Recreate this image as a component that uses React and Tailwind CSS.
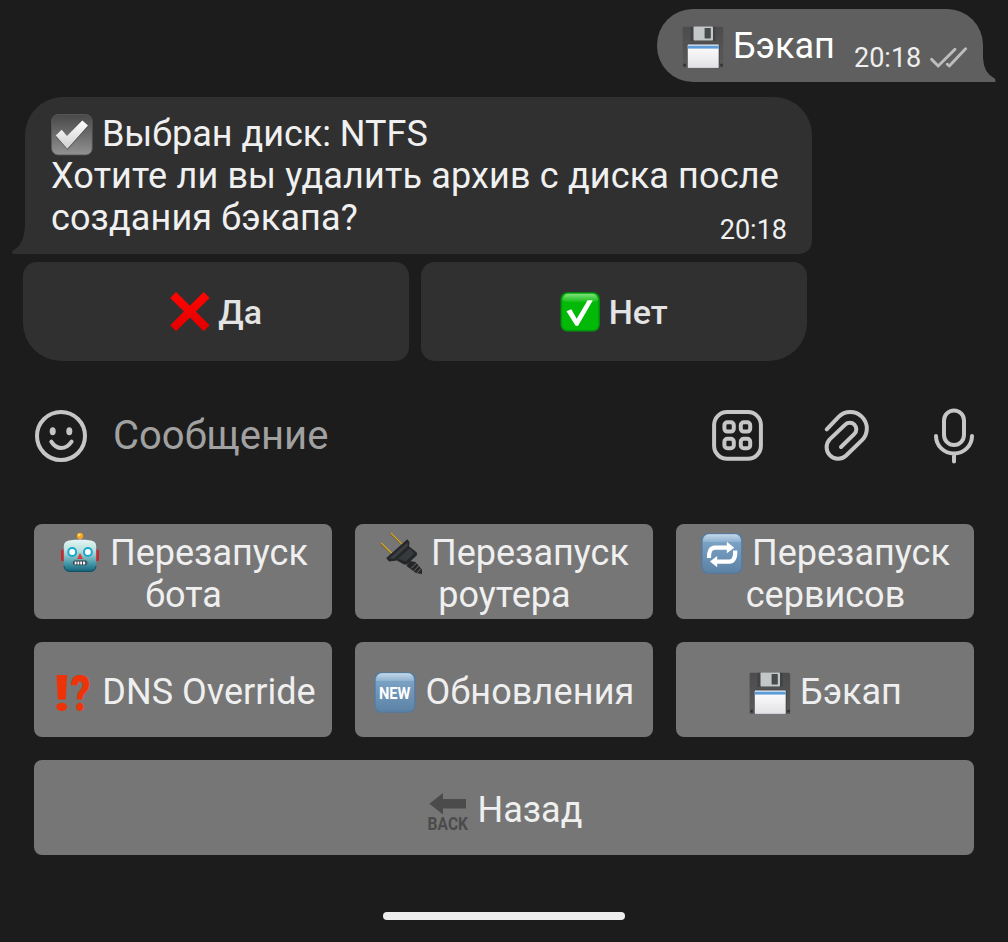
import React from "react";

function Emoji({ small = false, low = false, children }) {
  return (
    <svg
      viewBox="0 0 42 42"
      aria-hidden="true"
      className={
        small
          ? "inline-block size-10 shrink-0 overflow-visible align-[-8px]"
          : low
            ? "inline-block size-[42px] shrink-0 overflow-visible align-[-10px]"
            : "inline-block size-[42px] shrink-0 overflow-visible align-[-9px]"
      }
    >
      {children}
    </svg>
  );
}

function Floppy() {
  return (
    <Emoji low>
      <defs>
        <linearGradient id="floppyBody" x1="0" y1="0" x2="0" y2="1">
          <stop offset="0" stopColor="#4c4c4c" />
          <stop offset="1" stopColor="#5a5a5a" />
        </linearGradient>
        <linearGradient id="floppyLabel" x1="0" y1="0" x2="0" y2="1">
          <stop offset="0" stopColor="#ffffff" />
          <stop offset="1" stopColor="#e2e2e6" />
        </linearGradient>
      </defs>
      <path d="M1.5 0.8H40L41.2 2V41.9H0.6V1.8Z" fill="url(#floppyBody)" />
      <rect x="8.5" y="0.8" width="25" height="14" fill="#414345" />
      <rect x="11.5" y="0.5" width="19.5" height="14" rx="0.8" fill="#c3c7c7" />
      <rect x="22.6" y="2" width="6.2" height="10.4" rx="0.6" fill="#484b4c" />
      <rect x="5" y="17.8" width="32.5" height="24.1" rx="1" fill="#3c3f44" />
      <rect x="5.7" y="18.5" width="31" height="23.4" fill="url(#floppyLabel)" />
      <rect x="5.7" y="19.6" width="31" height="3" fill="#5a9bd8" />
      <path d="M1.4 37.8h2.4v2.6H1.4zM38.3 37.8h2.4v2.6h-2.4z" fill="#303030" />
    </Emoji>
  );
}

function GrayCheck() {
  return (
    <Emoji>
      <defs>
        <linearGradient id="grayBox" x1="0" y1="0" x2="0" y2="1">
          <stop offset="0" stopColor="#484848" />
          <stop offset="1" stopColor="#929292" />
        </linearGradient>
        <linearGradient id="grayTick" x1="0" y1="0" x2="0" y2="1">
          <stop offset="0" stopColor="#ffffff" />
          <stop offset="1" stopColor="#cfcfcf" />
        </linearGradient>
      </defs>
      <g transform="translate(0 0.6)">
        <rect x="0.6" y="0.9" width="40.6" height="40.4" rx="6.5" fill="url(#grayBox)" stroke="#5c5c5c" strokeWidth="0.8" />
        <path d="M4.7 23.2 10.7 17.4 16 23.6 31.3 8 37 12.9 16.5 36.5Z" fill="#3e3e3e" opacity="0.6" />
        <path d="M4.7 21.9 10.7 16.2 16 22.5 31.3 6.8 37 11.8 16.3 35.2Z" fill="url(#grayTick)" />
      </g>
    </Emoji>
  );
}

function RedCross() {
  return (
    <Emoji small>
      <defs>
        <linearGradient id="crossRed" x1="0" y1="0" x2="0" y2="1">
          <stop offset="0" stopColor="#ff0600" />
          <stop offset="1" stopColor="#e20000" />
        </linearGradient>
      </defs>
      <path
        d="M6.4 0 20.9 14.5 35.4 0 41.6 6.2 27.1 20.5 41.6 35 35.4 41.2 20.9 26.7 6.4 41.2 0.2 35 14.7 20.5 0.2 6.2Z"
        fill="url(#crossRed)"
      />
    </Emoji>
  );
}

function GreenCheck() {
  return (
    <Emoji small>
      <defs>
        <linearGradient id="greenShine" x1="0" y1="0" x2="0" y2="1">
          <stop offset="0" stopColor="#7fe07c" />
          <stop offset="1" stopColor="#14bd14" />
        </linearGradient>
      </defs>
      <rect x="0.6" y="0.2" width="41.2" height="41.2" rx="7" fill="#00990a" />
      <rect x="2.2" y="1.6" width="38" height="38" rx="5.6" fill="#02b908" />
      <path d="M8 1.8H34.4Q39.4 2.2 39.8 9.1Q36 10.6 31 10.6H11Q6 10.6 2.6 9.1Q3 2.2 8 1.8Z" fill="url(#greenShine)" />
      <path d="M6.8 20.2 11.9 18.2 17.5 28 29 8.7H34.5L19 35.4H16.4Z" fill="#fff" />
    </Emoji>
  );
}

function Robot() {
  return (
    <Emoji>
      <defs>
        <linearGradient id="robotHead" x1="0" y1="0" x2="0" y2="1">
          <stop offset="0" stopColor="#e4f6f2" />
          <stop offset="0.35" stopColor="#b9dedd" />
          <stop offset="0.75" stopColor="#4296a6" />
          <stop offset="1" stopColor="#146076" />
        </linearGradient>
      </defs>
      <rect x="2" y="17.6" width="4" height="11.6" rx="1.6" fill="#b92d33" />
      <rect x="36" y="17.6" width="4" height="11.6" rx="1.6" fill="#b92d33" />
      <path d="M16.6 9.6Q17 6 21 6T25.4 9.6Z" fill="#6a4a96" />
      <circle cx="21" cy="4" r="3.2" fill="#f5a51c" />
      <circle cx="20.3" cy="3.1" r="1.3" fill="#ffdf6b" />
      <path d="M10 8.4Q21 6.6 32 8.4Q37 9.2 37.2 14V33.5Q37.2 39.8 31 39.8H11Q4.8 39.8 4.8 33.5V14Q5 9.2 10 8.4Z" fill="url(#robotHead)" />
      <path d="M5 34Q5.5 39.4 11 39.4H31Q36.5 39.4 37 34" fill="none" stroke="#124f63" strokeWidth="1" />
      <circle cx="13.2" cy="20" r="4.9" fill="#12a9cd" />
      <circle cx="28.9" cy="20" r="4.9" fill="#12a9cd" />
      <circle cx="13.2" cy="20" r="3" fill="#fff" />
      <circle cx="28.9" cy="20" r="3" fill="#fff" />
      <path d="M21 21 24 27H18.1Z" fill="#dc3b34" />
      <rect x="14" y="28.6" width="14.4" height="4.6" rx="2.2" fill="#2b3742" />
      <path d="M15.6 30.9H27.2" stroke="#fff" strokeWidth="3" strokeDasharray="1.9 0.9" />
    </Emoji>
  );
}

function Plug() {
  return (
    <Emoji>
      <path d="M1 11.3 12.5 22.5M10.7 1.3 22.3 12.8" stroke="#7d6120" strokeWidth="2" />
      <path d="M1.2 10.9 12.5 22M10.9 0.9 22.3 12.3" stroke="#d6ae3c" strokeWidth="1.1" />
      <path d="M30 29 35.5 30 42 37.5V42L36 41 26.5 34Z" fill="#242627" />
      <path d="M31 36.5 36.5 31M34 38.8 39 33.5M37 40.8 41 36.5" stroke="#77797a" strokeWidth="0.9" />
      <path d="M6.2 26 27.4 7.2 29.6 10.2 29 14.2 36.8 20.5 37 23.2 26.6 32.8 23.5 32.2 17 28.5 9 29.4Z" fill="#25282a" />
      <path d="M9.5 26.2 27.4 10.4 28 13.8 13.8 26.8Z" fill="#3b3f41" />
      <path d="M18 26.8 29.4 16.4 34.4 21.2 25.8 29.4Z" fill="#363a3c" />
    </Emoji>
  );
}

function BlueTile({ id, children }) {
  return (
    <Emoji>
      <defs>
        <linearGradient id={id + "Fill"} x1="0" y1="0" x2="0" y2="1">
          <stop offset="0" stopColor="#83aacb" />
          <stop offset="1" stopColor="#5c82a6" />
        </linearGradient>
        <linearGradient id={id + "Shine"} x1="0" y1="0" x2="0" y2="1">
          <stop offset="0" stopColor="#c4d8e9" />
          <stop offset="1" stopColor="#8db0d0" />
        </linearGradient>
      </defs>
      <rect x="0.3" y="1.2" width="41.2" height="40.6" rx="7" fill="#527aa0" />
      <rect x="1.6" y="2.2" width="38.6" height="38.2" rx="6" fill={"url(#" + id + "Fill)"} />
      <path d="M8 2.2H34Q39.6 2.4 40 10H1.8Q2.4 2.4 8 2.2Z" fill={"url(#" + id + "Shine)"} />
      {children}
    </Emoji>
  );
}

function Repeat() {
  return (
    <BlueTile id="repeat">
      <path d="M8 26Q7.6 15.7 14 15.7H27" fill="none" stroke="#fff" strokeWidth="4.2" />
      <path d="M25.8 9.8 33.2 15.7 25.8 21.2Z" fill="#fff" />
      <path d="M34.2 18.5Q34.6 29.6 28.4 29.6H15" fill="none" stroke="#fff" strokeWidth="4.2" />
      <path d="M16.2 24 8.9 29.6 16.2 35.2Z" fill="#fff" />
    </BlueTile>
  );
}

function NewTile() {
  return (
    <BlueTile id="new">
      <text x="5" y="28.3" textLength="31.4" lengthAdjust="spacingAndGlyphs" fontFamily="Roboto, sans-serif" fontWeight="700" fontSize="16" letterSpacing="0" fill="#fff">
        NEW
      </text>
    </BlueTile>
  );
}

function Interrobang() {
  return (
    <Emoji>
      <g fontFamily="Roboto, sans-serif" fontWeight="900" fontSize="50" fill="#ee3309">
        <text x="2.2" y="40" textLength="16.5" lengthAdjust="spacingAndGlyphs">!</text>
        <text x="19.4" y="40" textLength="20" lengthAdjust="spacingAndGlyphs">?</text>
      </g>
    </Emoji>
  );
}

function Back() {
  return (
    <Emoji>
      <path d="M2.4 14.7 16 4V10H39V19.4H16V25.6Z" fill="#4b4b4b" />
      <text x="0.6" y="40.8" textLength="40.4" lengthAdjust="spacingAndGlyphs" fontFamily="Roboto, sans-serif" fontWeight="700" fontSize="18" letterSpacing="0" fill="#4b4b4b">
        BACK
      </text>
    </Emoji>
  );
}

function Key({ icon, lines, className = "" }) {
  return (
    <button
      className={
        "flex h-[95px] flex-col items-center justify-center rounded-[8px] bg-[#767676] pt-[5px] pl-px text-[36px] leading-[42px] text-[#efefef] " +
        className
      }
    >
      {lines.map((line, i) => (
        <span key={line} className="block h-[42px] whitespace-nowrap">
          {i === 0 && <>{icon} </>}
          {line}
        </span>
      ))}
    </button>
  );
}

export default function App() {
  return (
    <main className="flex h-[942px] w-[1008px] flex-col overflow-hidden bg-[#1c1c1c] pt-[9px] font-['Roboto',sans-serif]">
      <section className="relative mr-[25px] flex h-[73px] w-[326px] items-start self-end rounded-[36px] rounded-br-none bg-[#5f5f5f] pt-4 pl-[25px] text-white">
        <p className="h-[42px] text-[36px] leading-[42px] whitespace-nowrap">
          <Floppy /> Бэкап
        </p>
        <time className="absolute top-[33px] left-[197px] text-[27px] leading-8 text-[#efefef]">20:18</time>
        <svg viewBox="0 0 40 24" className="absolute top-[36px] left-[271px] h-6 w-10" fill="none" stroke="#bdbdbd" strokeWidth="2.9" strokeLinecap="round" strokeLinejoin="round">
          <path d="M3.6 14.4 10.2 21 27 4.2M19.2 19.2 21.3 21 37.6 3.8" />
        </svg>
        <svg viewBox="0 0 14 34" className="absolute top-[39px] left-[325px] h-[34px] w-[14px]" fill="#5f5f5f">
          <path d="M0 0H1V10Q1.5 25 13 30.8Q14 32 13.2 34H0Z" />
        </svg>
      </section>

      <section className="relative mt-[15px] ml-[25px] h-[157px] w-[787px] rounded-[38px] rounded-br-[13px] rounded-bl-none bg-[#303030] pt-4 pl-[26px] text-[#f0f0f0]">
        <p className="text-[36px] leading-[42px] whitespace-nowrap">
          <span className="block h-[42px]">
            <GrayCheck /> Выбран диск: NTFS
          </span>
          <span className="block tracking-[0.15px]">Хотите ли вы удалить архив с диска после</span>
          <span className="block tracking-[0.12px]">создания бэкапа?</span>
        </p>
        <time className="absolute top-[117px] right-[25px] text-[27px] leading-8">20:18</time>
        <svg viewBox="0 0 14 42" className="absolute top-[115px] left-[-13px] h-[42px] w-[14px]" fill="#303030">
          <path d="M14 0H13V12Q12.5 33 0.8 38.6Q-0.4 40 0.6 42H14Z" />
        </svg>
      </section>

      <section className="mt-2 ml-[23px] flex gap-3 text-[34px] leading-10 font-medium text-[#e4e4e4]">
        <button className="flex h-[99px] w-[386px] items-center justify-center rounded-[14px] rounded-bl-[38px] bg-[#303030] pt-px">
          <span className="block h-10 whitespace-nowrap">
            <RedCross /> Да
          </span>
        </button>
        <button className="flex h-[99px] w-[386px] items-center justify-center rounded-[14px] rounded-br-[38px] bg-[#303030] pt-px">
          <span className="block h-10 whitespace-nowrap">
            <GreenCheck /> Нет
          </span>
        </button>
      </section>

      <section className="mt-[39px] flex h-[72px] items-center pr-[24px] pl-[31px]">
        <svg viewBox="0 0 60 60" className="size-[60px]" fill="none" stroke="#c6c6c6" strokeWidth="4" strokeLinecap="round">
          <circle cx="30" cy="30" r="24" />
          <ellipse cx="21.7" cy="25.3" rx="3" ry="4" fill="#c6c6c6" stroke="none" />
          <ellipse cx="38.3" cy="25.3" rx="3" ry="4" fill="#c6c6c6" stroke="none" />
          <path d="M20.3 35.6Q24.3 42 30.2 42T40.6 35.6" />
        </svg>
        <span className="ml-[22px] flex-1 text-[40px] leading-[48px] text-[#a1a1a1]">Сообщение</span>
        <svg viewBox="0 0 60 60" className="size-[60px]" fill="none" stroke="#c6c6c6" strokeWidth="4">
          <rect x="7.1" y="6" width="46.8" height="46.8" rx="13" />
          <rect x="17.4" y="16.2" width="9.4" height="9.4" rx="3" />
          <rect x="33.8" y="16.2" width="9.4" height="9.4" rx="3" />
          <rect x="17.4" y="32.8" width="9.4" height="9.4" rx="3" />
          <rect x="33.8" y="32.8" width="9.4" height="9.4" rx="3" />
        </svg>
        <svg viewBox="0 0 60 60" className="ml-[49px] size-[60px]" fill="none" stroke="#c6c6c6" strokeWidth="4" strokeLinecap="round">
          <path d="M10.7 23.3 22.6 10.8A16.5 16.5 0 0 1 46 34.2L29.9 49.7A11.5 11.5 0 0 1 13.7 33.4L29.2 18.6A6.5 6.5 0 0 1 38.4 27.8L25 41" />
        </svg>
        <svg viewBox="0 0 60 60" className="ml-[48px] size-[60px]" fill="none" stroke="#c6c6c6" strokeWidth="4" strokeLinecap="round">
          <rect x="20" y="4.4" width="20" height="34.6" rx="10" />
          <path d="M12 30A18 17.5 0 0 0 48 30M30 47.7V55.4" />
        </svg>
      </section>

      <section className="mt-[52px] grid grid-cols-3 gap-[23px] px-[34px]">
        <Key icon={<Robot />} lines={["Перезапуск", "бота"]} />
        <Key icon={<Plug />} lines={["Перезапуск", "роутера"]} />
        <Key icon={<Repeat />} lines={["Перезапуск", "сервисов"]} />
        <Key icon={<Interrobang />} lines={["DNS Override"]} className="pl-[3px]" />
        <Key icon={<NewTile />} lines={["Обновления"]} className="tracking-[0.15px]" />
        <Key icon={<Floppy />} lines={["Бэкап"]} />
        <Key icon={<Back />} lines={["Назад"]} className="col-span-3" />
      </section>

      <div className="mt-[57px] h-2 w-[242px] self-center rounded-full bg-[#eeeeee]" />
    </main>
  );
}
